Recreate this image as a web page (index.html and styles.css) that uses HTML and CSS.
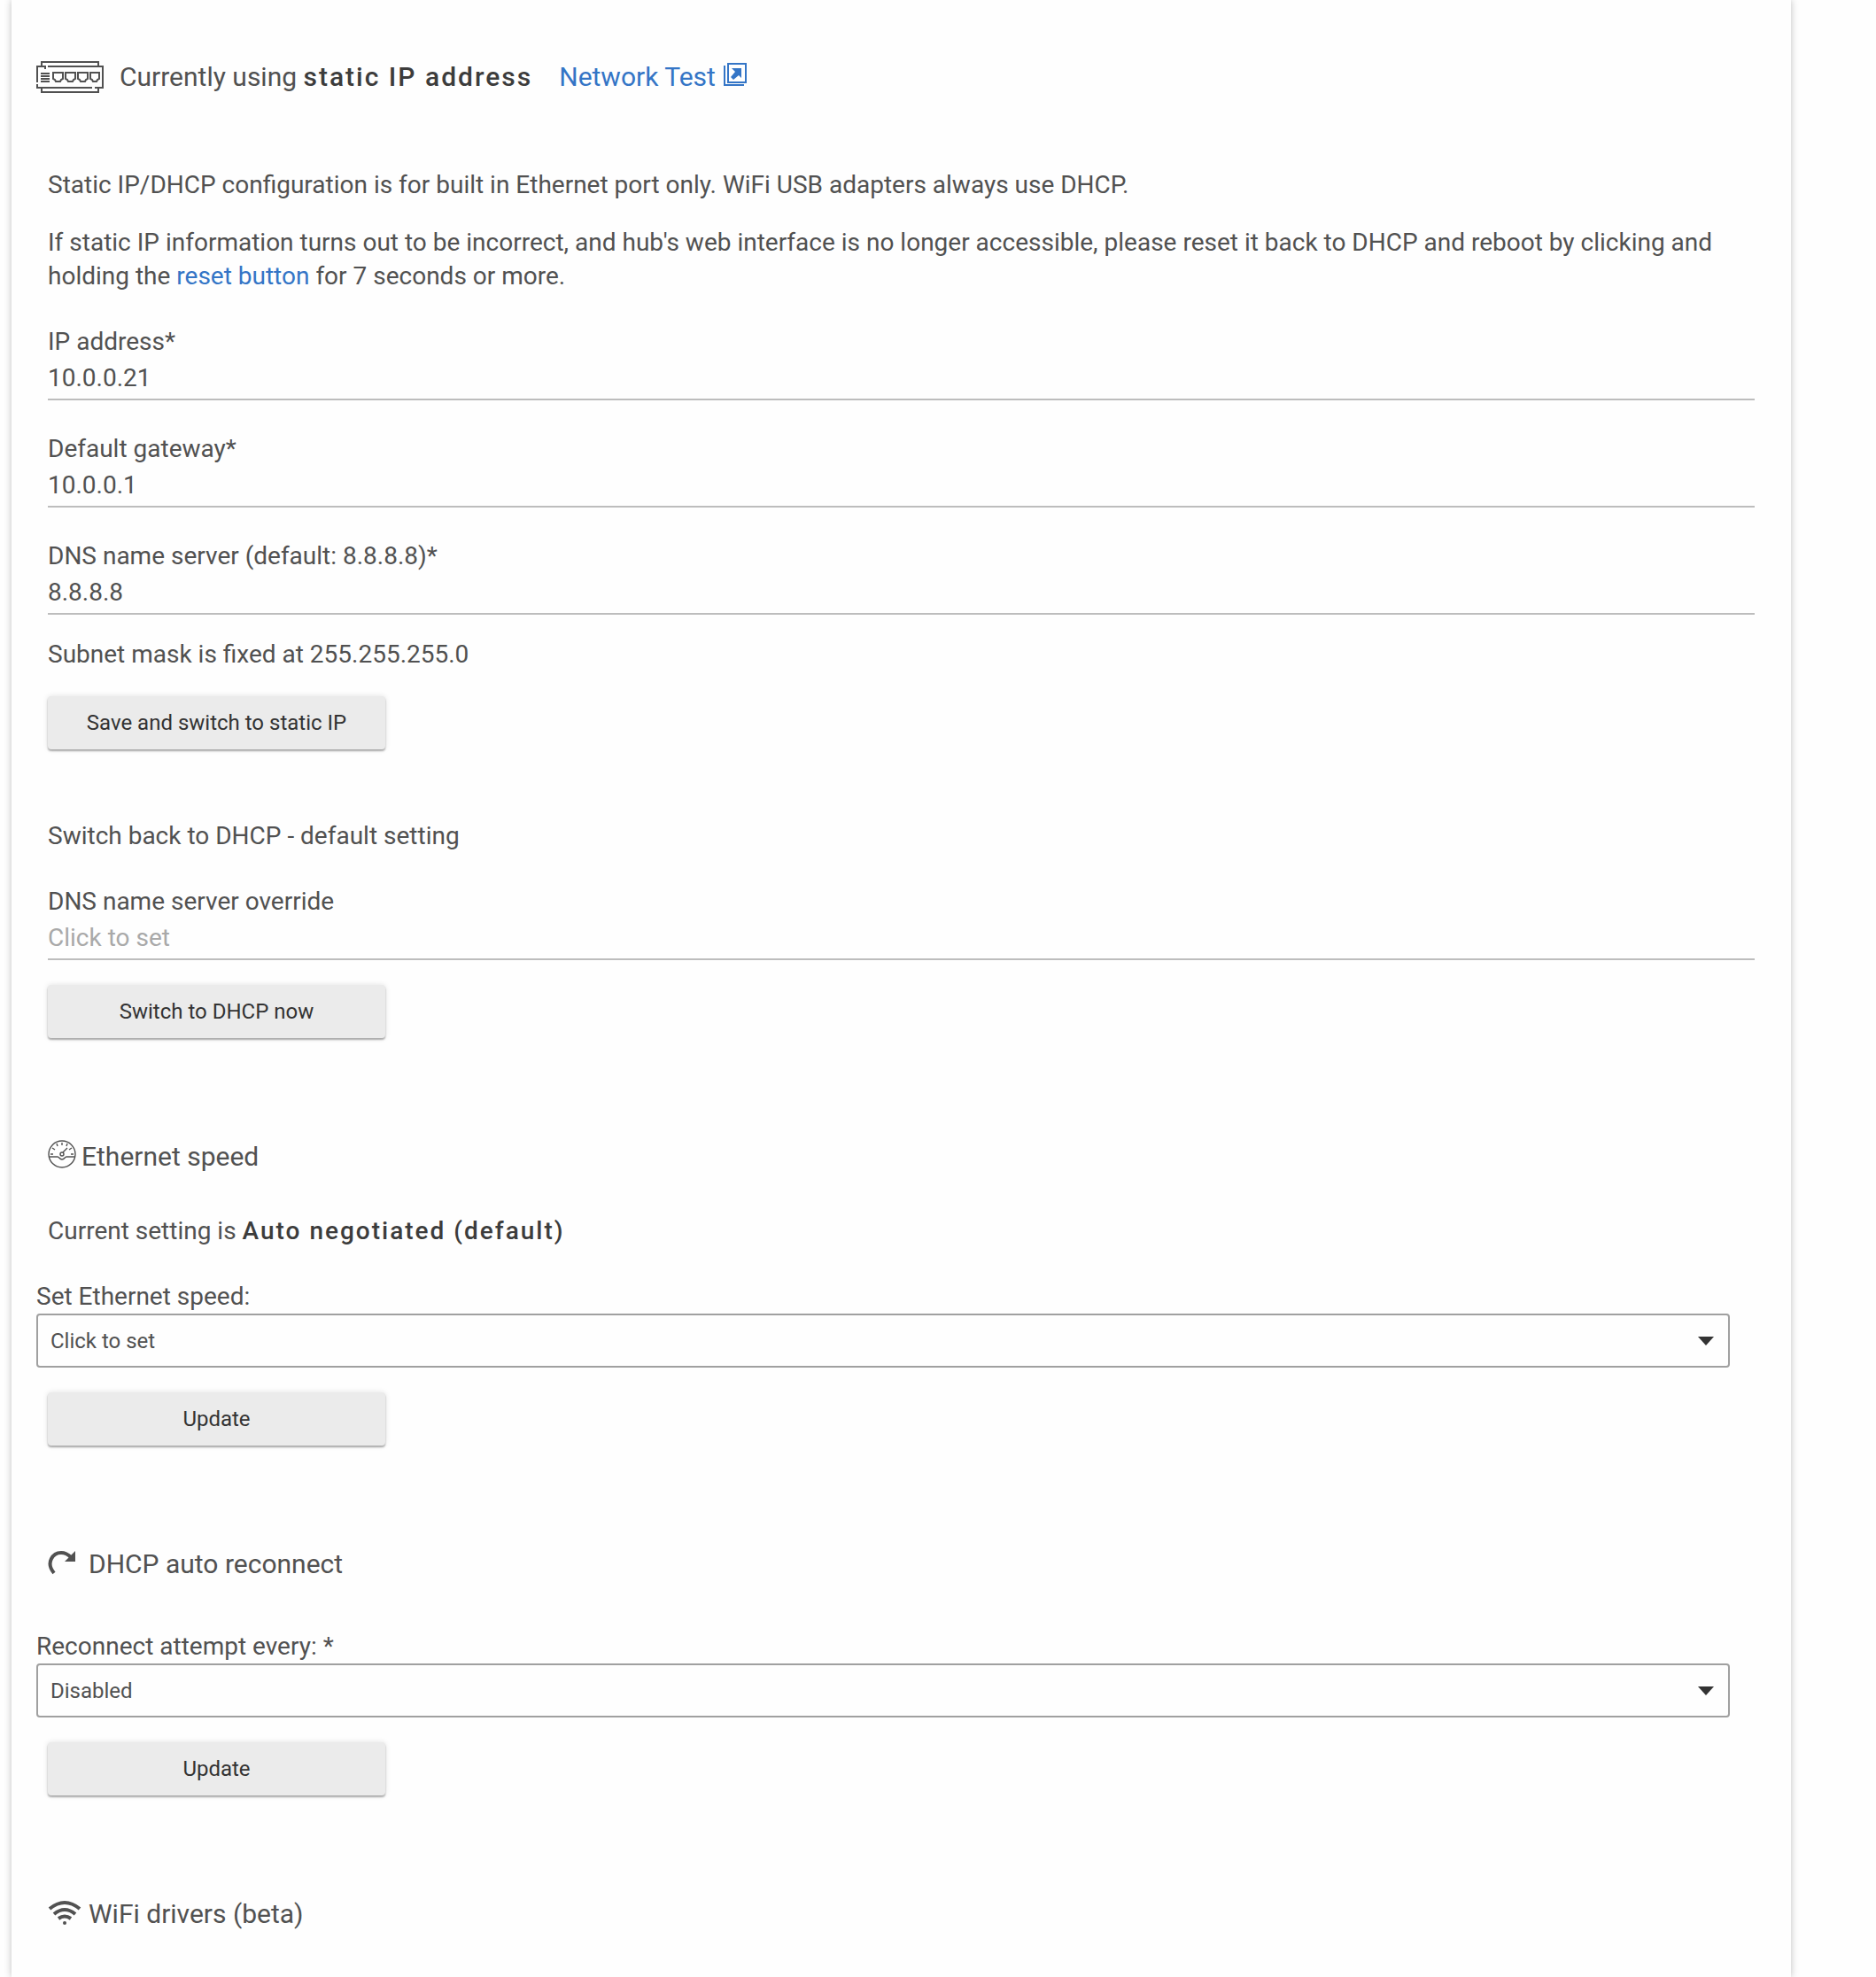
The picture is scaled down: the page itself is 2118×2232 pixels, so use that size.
FILE: index.html
```html
<!DOCTYPE html>
<html lang="en">
<head>
    <meta charset="UTF-8">
    <meta name="viewport" content="width=device-width, initial-scale=1.0">
    <title>Network Setup</title>
    <link rel="stylesheet" href="styles.css">
</head>
<body>
    <main class="card">
        <h1 class="title">
            <svg class="icon-switch" viewBox="0 0 76 36" fill="none" stroke="currentColor" stroke-width="2" aria-hidden="true">
                <path d="M6 6V1H70V6M13 6H75V30H70M1 24V6H10V9M1 26V30H63M66 30H71M6 30V35H70V30"/>
                <path d="M5 14H15M5 17H15M5 20H15M5 23H15"/>
                <path d="M19 13H30V20L28 21L27 23H22L21 21L19 20ZM33 13H44V20L42 21L41 23H36L35 21L33 20ZM47 13H58V20L56 21L55 23H50L49 21L47 20ZM61 13H71V20L69 21L68 23H64L63 21L61 20Z"/>
            </svg>
            <span>Currently using <strong>static IP address</strong></span>
            <a class="test-link" href="#test">Network Test
                <svg class="icon-open" viewBox="0 0 26 26" aria-hidden="true">
                    <path d="M5 1H25V22H5ZM1 3V25H23" fill="none" stroke="currentColor" stroke-width="2"/>
                    <path d="M9 6H20V17L17 14L11 19L8 16L13 10Z" fill="currentColor"/>
                </svg>
            </a>
        </h1>

        <section class="static">
            <p>Static IP/DHCP configuration is for built in Ethernet port only. WiFi USB adapters always use DHCP.</p>
            <p>If static IP information turns out to be incorrect, and hub's web interface is no longer accessible, please reset it back to DHCP and reboot by clicking and holding the <a href="#reset">reset button</a> for 7 seconds or more.</p>
            <div class="field">
                <label for="ip">IP address*</label>
                <input type="text" id="ip" value="10.0.0.21">
            </div>
            <div class="field">
                <label for="gateway">Default gateway*</label>
                <input type="text" id="gateway" value="10.0.0.1">
            </div>
            <div class="field">
                <label for="dns">DNS name server (default: 8.8.8.8)*</label>
                <input type="text" id="dns" value="8.8.8.8">
            </div>
            <p>Subnet mask is fixed at 255.255.255.0</p>
            <button class="btn" type="button">Save and switch to static IP</button>
        </section>

        <section class="dhcp">
            <p>Switch back to DHCP - default setting</p>
            <div class="field">
                <label for="override">DNS name server override</label>
                <input type="text" id="override" placeholder="Click to set">
            </div>
            <button class="btn" type="button">Switch to DHCP now</button>
        </section>

        <section class="speed">
            <h2>
                <svg class="icon-gauge" viewBox="0 0 32 32" fill="none" stroke="currentColor" stroke-width="1.4" aria-hidden="true">
                    <circle cx="16" cy="16" r="15"/>
                    <path d="M2 19H11C13 19 13 22 16 22S19 19 21 19H30"/>
                    <circle cx="16" cy="16" r="2"/>
                    <path d="M17 14L22 9M16 3V6M10 4L11 7M22 4L21 7M5 9L8 11M27 9L24 11M3 16H6M29 16H26"/>
                </svg>
                Ethernet speed
            </h2>
            <p>Current setting is <strong>Auto negotiated (default)</strong></p>
            <div class="choice">
                <label for="speed">Set Ethernet speed:</label>
                <div class="select">
                    <select id="speed">
                        <option>Click to set</option>
                    </select>
                </div>
            </div>
            <button class="btn" type="button">Update</button>
        </section>

        <section class="reconnect">
            <h2>
                <svg class="icon-wide" viewBox="0 0 38 32" aria-hidden="true">
                    <path d="M7 27C-3 15 6 4 15 4C20 4 23 6 26 9" fill="none" stroke="currentColor" stroke-width="4"/>
                    <path d="M31 2V14H19Z" fill="currentColor"/>
                </svg>
                DHCP auto reconnect
            </h2>
            <div class="choice">
                <label for="attempt">Reconnect attempt every: *</label>
                <div class="select">
                    <select id="attempt">
                        <option>Disabled</option>
                    </select>
                </div>
            </div>
            <button class="btn" type="button">Update</button>
        </section>

        <section class="wifi">
            <h2>
                <svg class="icon-wide" viewBox="0 0 38 32" aria-hidden="true">
                    <path d="M2 11Q19 -3 36 11M7 17Q19 7 31 17M12 22Q19 17 26 22" fill="none" stroke="currentColor" stroke-width="4"/>
                    <circle cx="19" cy="27" r="2" fill="currentColor"/>
                </svg>
                WiFi drivers (beta)
            </h2>
        </section>
    </main>
</body>
</html>
```

FILE: styles.css
```css
*{
    box-sizing: border-box;
}
body{
    margin: 0;
    background-color: #fefefe;
    font-family: Roboto, sans-serif;
    font-size: 28px;
    line-height: 38px;
    color: #515151;
}
h1, h2, p{
    margin: 0;
    font-weight: 400;
}
a{
    color: #3475c6;
    text-decoration: none;
}
strong{
    font-weight: 500;
    letter-spacing: 2px;
    color: #3c3c3c;
}
.card{
    min-height: 100vh;
    margin: 0 96px 0 13px;
    padding: 68px 41px 40px;
    box-shadow: 0 0 8px rgba(0, 0, 0, 0.25);
}
.title, h2{
    display: flex;
    align-items: center;
    font-size: 30px;
    line-height: 38px;
}
.title{
    gap: 18px;
    margin: 0 0 84px -13px;
}
.title .test-link{
    margin-left: 12px;
}
.icon-switch{
    width: 76px;
    height: 36px;
}
.icon-open{
    width: 26px;
    height: 26px;
    margin-left: 2px;
}
.icon-gauge, .icon-wide{
    width: 32px;
    height: 32px;
    margin: 0 6px 6px 0;
}
.icon-wide{
    width: 38px;
    margin: 0 8px 2px 0;
}
.static p + p{
    margin-top: 27px;
}
.field{
    margin-top: 36px;
}
.field label, .choice label{
    display: block;
}
.field input{
    display: block;
    width: 100%;
    height: 47px;
    padding: 2px 0 4px;
    border: 0;
    border-bottom: 2px solid #bdbdbd;
    background: transparent;
    font: inherit;
    color: inherit;
}
.field input::placeholder{
    color: #a9a9a9;
}
.field + p{
    margin-top: 26px;
}
.btn{
    display: block;
    width: 381px;
    height: 60px;
    margin-top: 28px;
    border: 0;
    border-radius: 4px;
    background-color: #ebebeb;
    box-shadow: 0 2px 2px rgba(0, 0, 0, 0.3), 0 0 6px rgba(0, 0, 0, 0.12);
    font-family: inherit;
    font-size: 24px;
    color: #333;
}
.dhcp{
    margin-top: 79px;
}
.speed, .reconnect, .wifi{
    margin-top: 115px;
}
.speed p{
    margin: 46px 0 36px;
}
.reconnect .choice{
    margin-top: 55px;
}
.choice{
    margin: 0 28px 0 -13px;
}
.select{
    position: relative;
}
/* drop-down arrow */
.select::after{
    content: "";
    position: absolute;
    top: 26px;
    right: 18px;
    border: 9px solid transparent;
    border-top: 10px solid #333;
    border-bottom: 0;
    pointer-events: none;
}
.select select{
    display: block;
    width: 100%;
    height: 61px;
    padding: 0 14px;
    border: 2px solid #a0a0a0;
    border-radius: 4px;
    appearance: none;
    background: transparent;
    font-family: inherit;
    font-size: 24px;
    color: inherit;
}
```
